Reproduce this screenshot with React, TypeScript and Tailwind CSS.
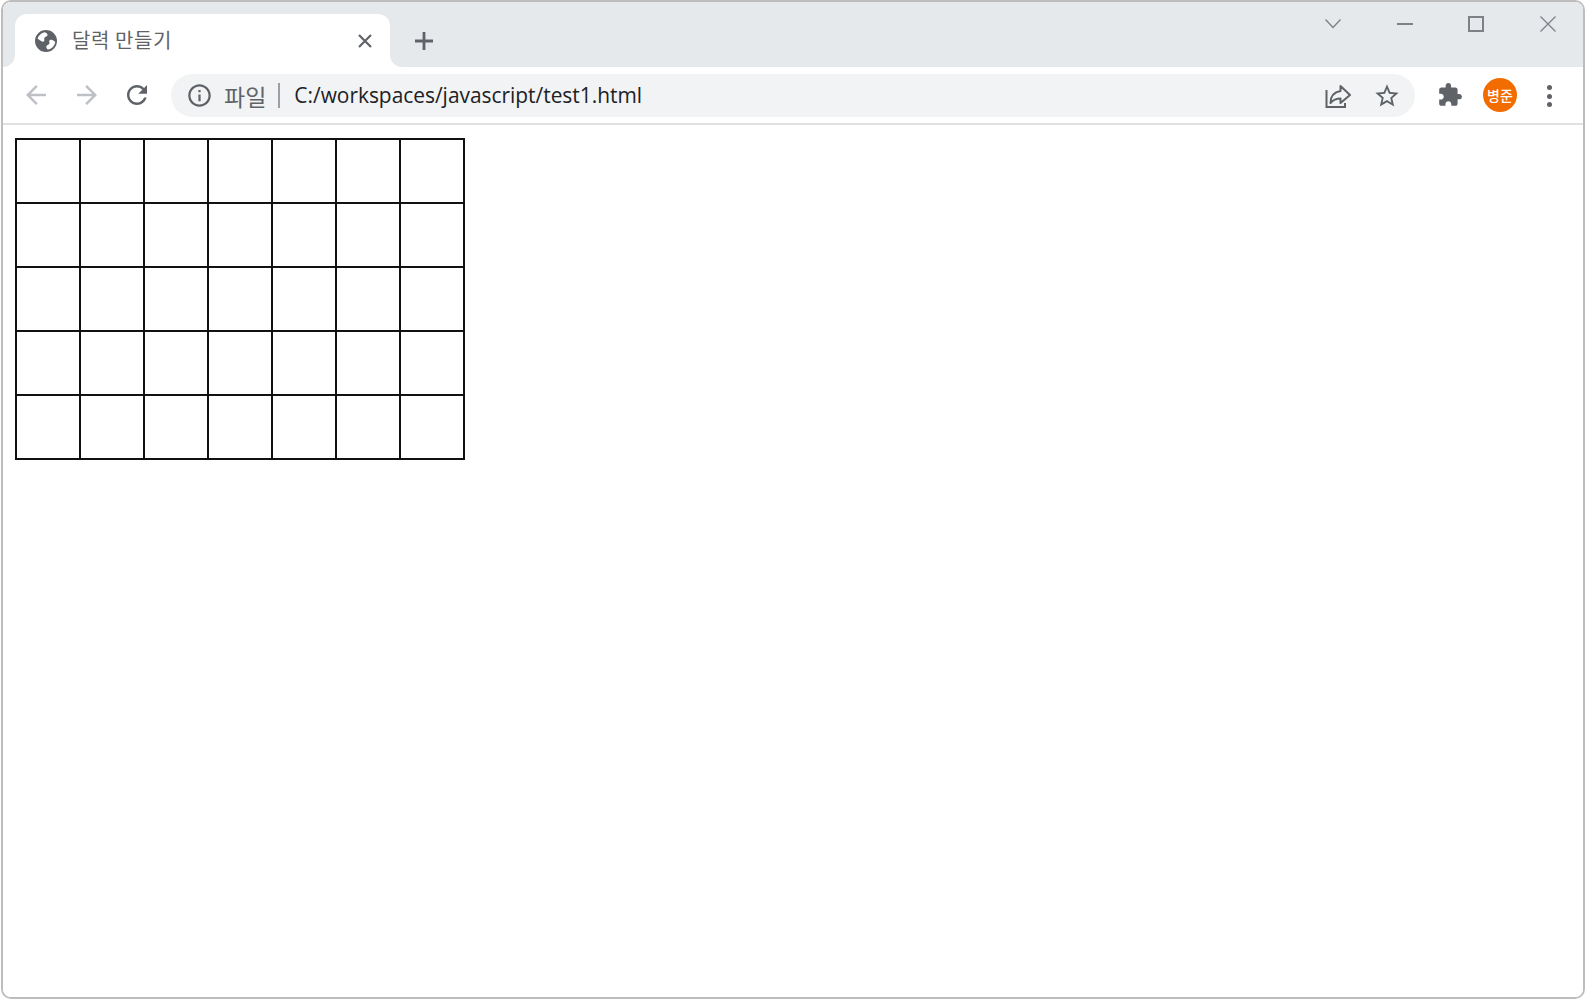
const kr = "font-['Noto_Sans_CJK_KR',sans-serif]";

function Grid() {
  const rows = [0, 1, 2, 3, 4];
  const cols = [0, 1, 2, 3, 4, 5, 6];
  return (
    <table className="border-collapse border-2 border-[#111] ml-[12px] mt-[13px]">
      <tbody>
        {rows.map((r) => (
          <tr key={r}>
            {cols.map((c) => (
              <td key={c} className="w-[64px] h-[64px] p-0 border-2 border-[#111]"></td>
            ))}
          </tr>
        ))}
      </tbody>
    </table>
  );
}

function Icon({ d, className }: { d: string; className: string }) {
  return (
    <svg viewBox="0 0 24 24" className={className} fill="currentColor">
      <path d={d} fillRule="evenodd" />
    </svg>
  );
}

export default function App() {
  return (
    <div className="w-[1585px] h-[999px] bg-white pl-px">
      <div className="w-[1584px] h-[999px] border-2 border-[#bdbdbd] rounded-[10px] overflow-hidden flex flex-col bg-white">
        {/* title bar */}
        <div className="h-[65px] flex bg-white shrink-0">
          <div className="w-[12px] bg-[#e6e9ec] rounded-br-[12px]"></div>
          <div className="w-[375px] bg-[#e6e9ec] pt-[12px]">
            <div className="h-[53px] bg-white rounded-t-[12px] flex items-center pl-[19px] pr-[17px]">
              <svg viewBox="0 0 24 24" className="w-[24px] h-[24px] text-[#5f6368] shrink-0" fill="currentColor">
                <path
                  fillRule="evenodd"
                  d="M12 1a11 11 0 1 0 0 22 11 11 0 0 0 0-22zM3.600 9.600C4.700 6.300 7.300 3.900 10.800 3.200c1.700.7 3 1.700 2.700 3-.3 1.200-2.200 1.300-3 2.500-.7 1.100.1 2.200-.3 3.200-.4 1-1.700 1-2.700.4-1.300-.7-2.700-1.500-3.900-2.700zM13.800 20.600c-1-.9-1.800-2.100-1.400-3.300.4-1.300 2.200-1.300 2.900-2.500.6-1.100-.4-2.100 0-3.100.4-1 1.800-1 2.900-.6 1.100.4 2.200 1.100 3 1.900-.5 3.800-3.500 6.900-7.400 7.600z"
                />
              </svg>
              <span className={`ml-[14px] mb-[2px] text-[20px] leading-[24px] text-[#5f6368] tracking-[0.6px] ${kr}`}>달력 만들기</span>
              <div className="flex-1"></div>
              <svg viewBox="0 0 16 16" className="w-[16px] h-[16px] text-[#5f6368]" fill="none" stroke="currentColor" strokeWidth="2.200">
                <path d="M2 2l12 12M14 2L2 14" />
              </svg>
            </div>
          </div>
          <div className="flex-1 bg-[#e6e9ec] rounded-bl-[12px] relative flex">
            <div className="ml-[24px] mt-[29px] w-[20px] h-[20px] text-[#5f6368]">
              <svg viewBox="0 0 20 20" className="w-[20px] h-[20px]" fill="none" stroke="currentColor" strokeWidth="2.800">
                <path d="M10 1v18M1 10h18" />
              </svg>
            </div>
            <div className="flex-1"></div>
            {/* window controls */}
            <div className="flex text-[#7d8084]">
              <div className="w-[72px] h-[44px] flex items-center justify-center">
                <svg viewBox="0 0 16 10" className="w-[16px] h-[10px]" fill="none" stroke="currentColor" strokeWidth="1.300">
                  <path d="M0.500 0.500L8 8.500L15.500 0.500" />
                </svg>
              </div>
              <div className="w-[71px] h-[44px] flex items-center justify-center">
                <div className="w-[16px] h-[2px] bg-[#7d8084]"></div>
              </div>
              <div className="w-[72px] h-[44px] flex items-center justify-center">
                <div className="w-[16px] h-[16px] border-2 border-[#7d8084]"></div>
              </div>
              <div className="w-[71px] h-[44px] flex items-center justify-center">
                <svg viewBox="0 0 16 16" className="w-[16px] h-[16px]" fill="none" stroke="currentColor" strokeWidth="1.300">
                  <path d="M0.500 0.500L15.500 15.500M15.500 0.500L0.500 15.500" />
                </svg>
              </div>
            </div>
          </div>
        </div>

        {/* toolbar */}
        <div className="h-[58px] shrink-0 border-b-2 border-[#dfe1e3] flex items-start pt-[7px] bg-white">
          <Icon
            className="w-[30px] h-[30px] text-[#bdc1c6] ml-[18px] mt-[6px]"
            d="M20 11H7.830l5.590-5.590L12 4l-8 8 8 8 1.410-1.410L7.830 13H20v-2z"
          />
          <Icon
            className="w-[30px] h-[30px] text-[#bdc1c6] ml-[21px] mt-[6px]"
            d="M4 11h12.170l-5.590-5.590L12 4l8 8-8 8-1.410-1.410L16.170 13H4v-2z"
          />
          <Icon
            className="w-[30px] h-[30px] text-[#5f6368] ml-[20px] mt-[6px]"
            d="M17.650 6.350C16.200 4.900 14.210 4 12 4c-4.420 0-7.990 3.580-7.990 8s3.570 8 7.990 8c3.730 0 6.840-2.550 7.730-6h-2.080c-.82 2.330-3.040 4-5.650 4-3.310 0-6-2.690-6-6s2.690-6 6-6c1.660 0 3.140.69 4.220 1.780L13 11h7V4l-2.350 2.350z"
          />
          {/* address bar */}
          <div className="ml-[19px] w-[1244px] h-[43px] rounded-full bg-[#f1f3f4] flex items-center pl-[15px] pr-[14px]">
            <Icon
              className="w-[27px] h-[27px] text-[#5f6368]"
              d="M11 7h2v2h-2zm0 4h2v6h-2zm1-9C6.480 2 2 6.480 2 12s4.480 10 10 10 10-4.480 10-10S17.520 2 12 2zm0 18c-4.410 0-8-3.590-8-8s3.590-8 8-8 8 3.590 8 8-3.590 8-8 8z"
            />
            <span className={`ml-[11px] text-[23px] leading-[28px] text-[#5f6368] ${kr}`}>파일</span>
            <div className="ml-[12px] w-[2px] h-[25px] bg-[#9aa0a6]"></div>
            <span className="ml-[14px] mb-px text-[20.9px] leading-[28px] text-[#202124] font-['Open_Sans',sans-serif]">C:/workspaces/javascript/test1.html</span>
            <div className="flex-1"></div>
            <svg viewBox="0 0 26 26" className="w-[26px] h-[26px] text-[#5f6368]" fill="none" stroke="currentColor" strokeWidth="2">
              <path d="M1.500 7V24H20V20" />
              <path d="M5.500 20c0-7 4-11 10-12V3l9.500 9-9.500 8v-4.500c-4 0-7 1-10 4.500z" strokeLinejoin="round" />
            </svg>
            <Icon
              className="w-[28px] h-[28px] text-[#5f6368] ml-[22px]"
              d="M22 9.240l-7.190-.62L12 2 9.190 8.630 2 9.240l5.460 4.730L5.820 21 12 17.270 18.180 21l-1.630-7.030L22 9.240zM12 15.400l-3.760 2.270 1-4.280-3.320-2.880 4.380-.38L12 6.100l1.710 4.040 4.380.38-3.320 2.880 1 4.280L12 15.400z"
            />
          </div>
          <Icon
            className="w-[26px] h-[26px] text-[#5f6368] ml-[22px] mt-[8px]"
            d="M20.500 11H19V7c0-1.100-.9-2-2-2h-4V3.500C13 2.120 11.880 1 10.500 1S8 2.120 8 3.500V5H4c-1.100 0-1.990.9-1.990 2v3.800H3.500c1.490 0 2.700 1.210 2.700 2.700s-1.210 2.700-2.700 2.700H2V20c0 1.100.9 2 2 2h3.800v-1.500c0-1.490 1.210-2.700 2.700-2.700 1.490 0 2.700 1.210 2.700 2.700V22H17c1.100 0 2-.9 2-2v-4h1.500c1.380 0 2.500-1.120 2.500-2.500S21.880 11 20.500 11z"
          />
          <div className={`ml-[20px] mt-[4px] w-[34px] h-[34px] rounded-full bg-[#f36c00] text-white flex items-center justify-center text-[14px] font-medium leading-none ${kr}`}>
            병준
          </div>
          <div className="ml-[30px] mt-[11px] flex flex-col gap-[3.500px]">
            <div className="w-[5px] h-[5px] rounded-full bg-[#5f6368]"></div>
            <div className="w-[5px] h-[5px] rounded-full bg-[#5f6368]"></div>
            <div className="w-[5px] h-[5px] rounded-full bg-[#5f6368]"></div>
          </div>
        </div>

        {/* page */}
        <div className="flex-1 bg-white">
          <Grid />
        </div>
      </div>
    </div>
  );
}
